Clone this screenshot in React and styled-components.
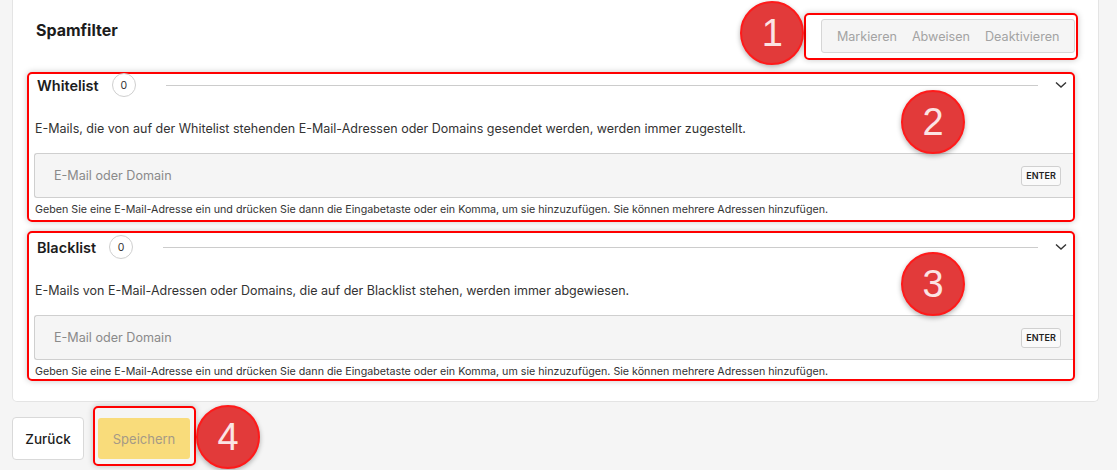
import styled, { createGlobalStyle } from "styled-components";

const GlobalStyle = createGlobalStyle`
    html, body {
        margin: 0;
        padding: 0;
        background: #f5f5f5;
        font-family: Inter, "Noto Sans", sans-serif;
        color: #222;
    }
`;

export default function App() {
    return (
        <>
            <GlobalStyle />
            <Page>
                <Card>
                    <Header>
                        <Title>Spamfilter</Title>
                        <Highlight $pad="4px 1px 5px 15px">
                            <Marker $left="-66px" $top="-14px">1</Marker>
                            <Segmented>
                                <Segment>Markieren</Segment>
                                <Segment>Abweisen</Segment>
                                <Segment>Deaktivieren</Segment>
                            </Segmented>
                        </Highlight>
                    </Header>

                    <Sections>
                        <ListSection
                            title="Whitelist"
                            marker="2"
                            markerTop="16px"
                            headOffset={0}
                            description="E-Mails, die von auf der Whitelist stehenden E-Mail-Adressen oder Domains gesendet werden, werden immer zugestellt."
                        />
                        <ListSection
                            title="Blacklist"
                            marker="3"
                            markerTop="19px"
                            headOffset={3}
                            description="E-Mails von E-Mail-Adressen oder Domains, die auf der Blacklist stehen, werden immer abgewiesen."
                        />
                    </Sections>
                </Card>

                <Footer>
                    <BackButton>Zurück</BackButton>
                    <Highlight $pad="10px 4px 5px 3px">
                        <SaveButton disabled>Speichern</SaveButton>
                        <Marker $left="calc(100% + 2px)" $top="-3px">4</Marker>
                    </Highlight>
                </Footer>
            </Page>
        </>
    );
}

const ListSection = ({ title, description, marker, markerTop, headOffset }) => {
    return (
        <Highlight $pad="0 0 0 5px">
            <Marker $left="872px" $top={markerTop}>{marker}</Marker>
            <SectionHead $offset={headOffset}>
                <SectionTitle>{title}</SectionTitle>
                <Count>0</Count>
                <Rule />
                <Chevron width="12" height="8" viewBox="0 0 12 8">
                    <polyline points="1,1.5 6,6 11,1.5" fill="none" stroke="#333" strokeWidth="1.4" />
                </Chevron>
            </SectionHead>
            <Description>{description}</Description>
            <InputBox>
                <Placeholder>E-Mail oder Domain</Placeholder>
                <Kbd>ENTER</Kbd>
            </InputBox>
            <Hint $offset={headOffset}>
                Geben Sie eine E-Mail-Adresse ein und drücken Sie dann die Eingabetaste oder ein Komma, um sie hinzuzufügen. Sie können mehrere Adressen hinzufügen.
            </Hint>
        </Highlight>
    );
};

const Page = styled.div`
    width: 1117px;
    height: 470px;
    padding: 0 0 0 12px;
    box-sizing: border-box;
    overflow: hidden;
`;

const Card = styled.div`
    width: 1087px;
    box-sizing: border-box;
    background: #fff;
    border: 1px solid #e4e4e4;
    border-top: none;
    border-radius: 0 0 5px 5px;
    padding: 13px 23px 20px 14px;
`;

const Header = styled.div`
    display: flex;
    justify-content: space-between;
    align-items: flex-start;
    padding-left: 9px;
    margin-right: -3px;
`;

const Title = styled.h1`
    margin: 7px 0 0;
    font-size: 16px;
    font-weight: 700;
    color: #1c1c1c;
`;

const Highlight = styled.div`
    position: relative;
    border: 2px solid #ff0000;
    border-radius: 5px;
    padding: ${(props) => props.$pad};
    box-shadow: 0 0 6px rgba(0, 0, 0, 0.22);
`;

const Marker = styled.div`
    position: absolute;
    left: ${(props) => props.$left};
    top: ${(props) => props.$top};
    width: 60px;
    height: 60px;
    border-radius: 50%;
    background: #e23a3a;
    border: 2px solid #ff1a1a;
    box-shadow: 0 2px 5px rgba(0, 0, 0, 0.3);
    color: #fbe4e4;
    font-family: "Liberation Sans", Arial, sans-serif;
    font-size: 38px;
    display: flex;
    align-items: center;
    justify-content: center;
    z-index: 2;
`;

const Segmented = styled.div`
    display: flex;
    height: 32px;
    align-items: center;
    padding: 0 7px;
    background: #f5f5f5;
    border: 1px solid #d6d6d6;
    border-radius: 3px;
`;

const Segment = styled.span`
    padding: 0 7.5px;
    font-size: 12.6px;
    color: #a3a3a3;
`;

const Sections = styled.div`
    display: flex;
    flex-direction: column;
    gap: 9px;
    margin-top: 12px;
`;

const SectionHead = styled.div`
    display: flex;
    align-items: center;
    height: 22px;
    margin-top: ${(props) => props.$offset}px;
    padding: 0 4px 0 3px;
`;

const SectionTitle = styled.span`
    font-size: 14.5px;
    font-weight: 600;
    color: #1c1c1c;
`;

const Count = styled.span`
    margin-left: 13px;
    width: 22px;
    height: 22px;
    border: 1px solid #cfcfcf;
    border-radius: 50%;
    display: flex;
    align-items: center;
    justify-content: center;
    font-size: 10.5px;
    color: #333;
`;

const Rule = styled.div`
    flex: 1;
    height: 1px;
    background: #cccccc;
    margin: 0 17px 0 30px;
`;

const Chevron = styled.svg`
    display: block;
    margin-right: 2px;
`;

const Description = styled.p`
    margin: 0;
    padding: 25px 0 16px 1px;
    font-size: 12.5px;
    line-height: 16px;
    color: #333;
`;

const InputBox = styled.div`
    display: flex;
    align-items: center;
    justify-content: space-between;
    height: 43px;
    padding: 0 12px 0 19px;
    background: #f5f5f5;
    border: 1px solid #cfcfcf;
    border-right: none;
    border-radius: 3px 0 0 3px;
`;

const Placeholder = styled.span`
    font-size: 12.6px;
    color: #8a8a8a;
`;

const Kbd = styled.span`
    width: 38px;
    height: 18px;
    display: flex;
    align-items: center;
    justify-content: center;
    border: 1px solid #d0d0d0;
    border-radius: 3px;
    background: #fafafa;
    font-size: 9px;
    font-weight: 600;
    color: #222;
`;

const Hint = styled.p`
    margin: 0;
    padding: 5px 0 ${(props) => 4 - props.$offset}px 1px;
    font-size: 10.7px;
    line-height: 13px;
    color: #333;
`;

const Footer = styled.div`
    display: flex;
    align-items: flex-start;
    gap: 9px;
    margin-top: 4px;
`;

const BackButton = styled.button`
    margin-top: 11px;
    width: 72px;
    height: 43px;
    background: #fff;
    border: 1px solid #d9d9d9;
    border-radius: 4px;
    font-family: inherit;
    font-size: 13.5px;
    font-weight: 500;
    color: #1c1c1c;
`;

const SaveButton = styled.button`
    display: block;
    width: 92px;
    height: 41px;
    background: #f9dc7b;
    border: none;
    border-radius: 3px;
    font-family: inherit;
    font-size: 13px;
    color: #a59a86;
`;
